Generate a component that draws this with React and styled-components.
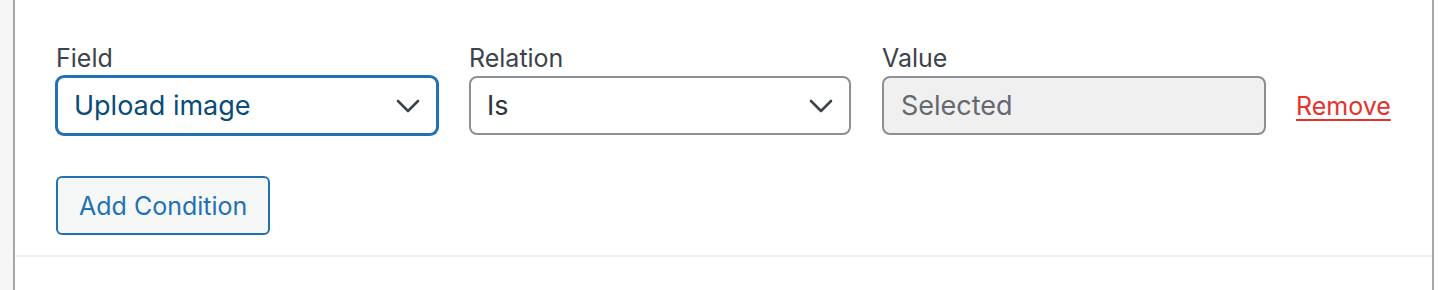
import React from "react";
import styled, { createGlobalStyle } from "styled-components";

const GlobalStyle = createGlobalStyle`
  html, body {
    margin: 0;
    padding: 0;
    background: #ffffff;
  }
  body {
    font-family: Inter, "Noto Sans", "Liberation Sans", sans-serif;
    -webkit-font-smoothing: antialiased;
  }
`;

const Page = styled.div`
  display: flex;
  height: 290px;
  background: #ffffff;
`;

const Gutter = styled.div`
  width: ${(p) => p.width}px;
  flex-shrink: 0;
  background: ${(p) => p.bg};
`;

const Panel = styled.div`
  flex: 1;
  display: flex;
  flex-direction: column;
  border-left: 2px solid #a7a7a7;
  border-right: 2px solid #a7a7a7;
  background: #ffffff;
`;

const Content = styled.div`
  padding: 43px 39px 20px 41px;
  display: flex;
  flex-direction: column;
  gap: 41px;
`;

const Row = styled.div`
  display: flex;
  align-items: flex-end;
  gap: 31px;
`;

const FieldGroup = styled.div`
  display: flex;
  flex-direction: column;
  gap: 2px;
  width: ${(p) => p.width}px;
`;

const Label = styled.label`
  font-size: 25px;
  line-height: 31px;
  color: #3c434a;
`;

const SelectBox = styled.div`
  box-sizing: border-box;
  height: 59px;
  display: flex;
  align-items: center;
  justify-content: space-between;
  padding: 0 16px 0 16px;
  border: 2px solid ${(p) => (p.focused ? "#2271b1" : "#8c8f94")};
  box-shadow: ${(p) => (p.focused ? "0 0 0 1px #2271b1" : "none")};
  border-radius: 8px;
  background: #ffffff;
  font-size: 27px;
  color: ${(p) => (p.focused ? "#0a4b78" : "#2c3338")};
`;

const Chevron = styled.svg`
  width: 24px;
  height: 14px;
  flex-shrink: 0;
`;

const ValueInput = styled.input`
  box-sizing: border-box;
  height: 59px;
  width: 100%;
  padding: 0 17px;
  border: 2px solid #8c8f94;
  border-radius: 8px;
  background: #f0f0f1;
  font-family: inherit;
  font-size: 27px;
  color: #646970;
  outline: none;
`;

const RemoveLink = styled.a`
  margin-left: -1px;
  height: 59px;
  display: flex;
  align-items: center;
  font-size: 25px;
  color: #e5322b;
  text-decoration: underline;
  text-decoration-thickness: 2px;
  text-underline-offset: 4px;
  cursor: pointer;
`;

const AddButton = styled.button`
  align-self: flex-start;
  box-sizing: border-box;
  height: 59px;
  padding: 0 21px;
  border: 2px solid #2271b1;
  border-radius: 6px;
  background: #f6f7f7;
  color: #2271b1;
  font-family: inherit;
  font-size: 25px;
  cursor: pointer;
`;

const Divider = styled.div`
  height: 2px;
  background: #efefef;
`;

const ChevronIcon = () => (
  <Chevron viewBox="0 0 24 14" fill="none">
    <path
      d="M2 2 L12 12 L22 2"
      stroke="#3c434a"
      strokeWidth="2.6"
      strokeLinecap="round"
      strokeLinejoin="round"
    />
  </Chevron>
);

export default function App() {
  return (
    <>
      <GlobalStyle />
      <Page>
        <Gutter width={13} bg="#f6f6f6" />
        <Panel>
          <Content>
            <Row>
              <FieldGroup width={382}>
                <Label>Field</Label>
                <SelectBox focused>
                  <span>Upload image</span>
                  <ChevronIcon />
                </SelectBox>
              </FieldGroup>
              <FieldGroup width={382}>
                <Label>Relation</Label>
                <SelectBox>
                  <span>Is</span>
                  <ChevronIcon />
                </SelectBox>
              </FieldGroup>
              <FieldGroup width={384}>
                <Label>Value</Label>
                <ValueInput value="Selected" readOnly />
              </FieldGroup>
              <RemoveLink>Remove</RemoveLink>
            </Row>
            <AddButton>Add Condition</AddButton>
          </Content>
          <Divider />
        </Panel>
        <Gutter width={4} bg="#ffffff" />
      </Page>
    </>
  );
}
